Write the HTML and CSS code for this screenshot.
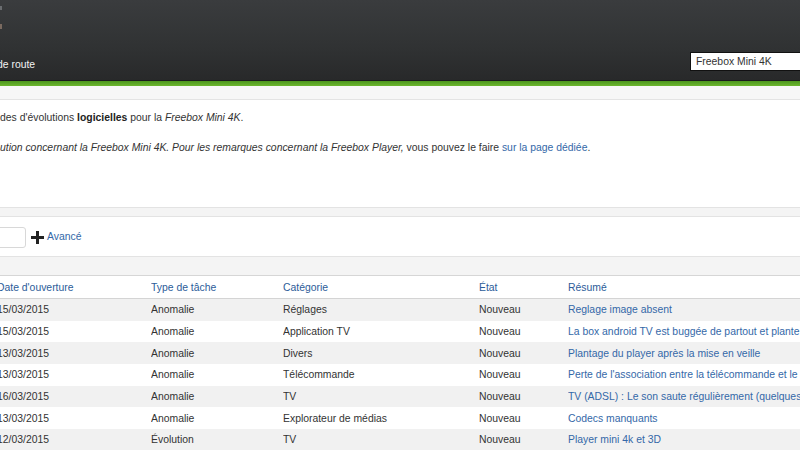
FILE: index.html
```html
<!DOCTYPE html>
<html lang="fr">
<head>
<meta charset="utf-8">
<title>Freebox Mini 4K</title>
<link rel="stylesheet" href="styles.css">
</head>
<body>
<div class="page">
  <header class="topbar">
    <div class="brand-bits"><span class="bit"></span><span class="bit bit2"></span></div>
    <nav class="nav">de route</nav>
    <input class="project" type="text" value="Freebox Mini 4K">
  </header>
  <div class="greenbar"></div>
  <div class="subbar"></div>

  <section class="intro">
    <p>des d'évolutions <strong>logicielles</strong> pour la <em>Freebox Mini 4K</em>.</p>
    <p class="second"><em>ution concernant la Freebox Mini 4K. Pour les remarques concernant la Freebox Player,</em> vous pouvez le faire <a href="#">sur la page dédiée</a>.</p>
  </section>

  <div class="band"></div>

  <section class="filters">
    <input class="search" type="text">
    <span class="plus"><svg width="13" height="13" viewBox="0 0 13 13"><path d="M5 0h3v5h5v3H8v5H5V8H0V5h5z" fill="#222"/></svg></span>
    <a class="adv" href="#">Avancé</a>
  </section>

  <div class="band band2"></div>

  <table class="tasks">
    <colgroup>
      <col class="c1"><col class="c2"><col class="c3"><col class="c4"><col class="c5">
    </colgroup>
    <thead>
      <tr><th>Date d'ouverture</th><th>Type de tâche</th><th>Catégorie</th><th>État</th><th>Résumé</th></tr>
    </thead>
    <tbody>
      <tr><td>15/03/2015</td><td>Anomalie</td><td>Réglages</td><td>Nouveau</td><td><a href="#">Reglage image absent</a></td></tr>
      <tr><td>15/03/2015</td><td>Anomalie</td><td>Application TV</td><td>Nouveau</td><td><a href="#">La box android TV est buggée de partout et plante tout le temps</a></td></tr>
      <tr><td>13/03/2015</td><td>Anomalie</td><td>Divers</td><td>Nouveau</td><td><a href="#">Plantage du player après la mise en veille</a></td></tr>
      <tr><td>13/03/2015</td><td>Anomalie</td><td>Télécommande</td><td>Nouveau</td><td><a href="#">Perte de l'association entre la télécommande et le boîtier</a></td></tr>
      <tr><td>16/03/2015</td><td>Anomalie</td><td>TV</td><td>Nouveau</td><td><a href="#">TV (ADSL) : Le son saute régulièrement (quelques secondes)</a></td></tr>
      <tr><td>13/03/2015</td><td>Anomalie</td><td>Explorateur de médias</td><td>Nouveau</td><td><a href="#">Codecs manquants</a></td></tr>
      <tr><td>12/03/2015</td><td>Évolution</td><td>TV</td><td>Nouveau</td><td><a href="#">Player mini 4k et 3D</a></td></tr>
    </tbody>
  </table>
</div>
</body>
</html>
```

FILE: styles.css
```css
html, body {
  margin: 0;
  padding: 0;
  background: #ffffff;
  overflow: hidden;
}
body {
  width: 800px;
  height: 450px;
  font-family: "Liberation Sans", Arial, sans-serif;
  font-size: 10.4px;
  color: #333333;
}
.page {
  width: 803px;
  margin-left: -3px;
}
a {
  color: #3468a8;
  text-decoration: none;
}

/* header */
.topbar {
  position: relative;
  height: 80px;
  box-sizing: border-box;
  background: linear-gradient(#3a3c3e, #303233 60%, #28292a);
  display: flex;
  align-items: flex-end;
  padding-bottom: 9px;
}
.brand-bits {
  position: absolute;
  left: 3px;
  top: 0;
}
.bit {
  position: absolute;
  left: 0;
  top: 6px;
  width: 2px;
  height: 4px;
  background: #6a6d70;
}
.bit2 {
  top: 24px;
  height: 5px;
  background: #7a6a60;
}
.nav {
  color: #f2f2f2;
  line-height: 12px;
  margin-bottom: 0;
}
.project {
  margin-left: auto;
  margin-right: -13px;
  width: 123px;
  height: 19px;
  box-sizing: border-box;
  border: 1px solid #111;
  background: #ffffff;
  padding: 0 0 0 5px;
  font-family: "Liberation Sans", Arial, sans-serif;
  font-size: 10.4px;
  color: #333;
  outline: none;
}
.greenbar {
  height: 5px;
  border-top: 1px solid #1a1b1c;
  background: linear-gradient(#4c961d, #6cb62e);
}
.subbar {
  height: 13px;
  background: #f7f7f7;
  border-bottom: 1px solid #e4e4e4;
}

/* intro */
.intro {
  padding: 11px 0 52px 3px;
}
.intro p {
  margin: 0;
  line-height: 14px;
}
.intro .second {
  margin-top: 16px;
}
.intro strong {
  font-weight: bold;
  color: #222;
}

/* bands */
.band {
  height: 8px;
  background: #f4f4f4;
  border-top: 1px solid #e3e3e3;
  border-bottom: 1px solid #e3e3e3;
}
.band2 {
  height: 18px;
  border-bottom-color: #d6d6d6;
}

/* filters */
.filters {
  height: 39px;
  box-sizing: border-box;
  padding-top: 10px;
  display: flex;
  align-items: flex-start;
}
.search {
  width: 31px;
  height: 21px;
  margin: 0 0 0 -2px;
  box-sizing: border-box;
  border: 1px solid #d8d8d8;
  border-radius: 3px;
  background: #fff;
  outline: none;
}
.plus {
  display: flex;
  margin: 4px 0 0 5px;
}
.adv {
  margin: 4px 0 0 3px;
  line-height: 12px;
}

/* table */
.tasks {
  border-collapse: collapse;
  table-layout: fixed;
  width: 803px;
}
.c1 { width: 154px; }
.c2 { width: 132px; }
.c3 { width: 196px; }
.c4 { width: 89px; }
.c5 { width: 232px; }
.tasks th,
.tasks td {
  padding: 0;
  text-align: left;
  white-space: nowrap;
  overflow: hidden;
  vertical-align: middle;
}
.tasks th {
  height: 22px;
  font-weight: normal;
  color: #2c5c99;
  border-bottom: 1px solid #d4d4d4;
  box-shadow: 0 1px 1px #e6e6e6;
}
.tasks td {
  height: 21.7px;
}
.tasks tbody tr:nth-child(odd) {
  background: #f1f1f1;
}
```
